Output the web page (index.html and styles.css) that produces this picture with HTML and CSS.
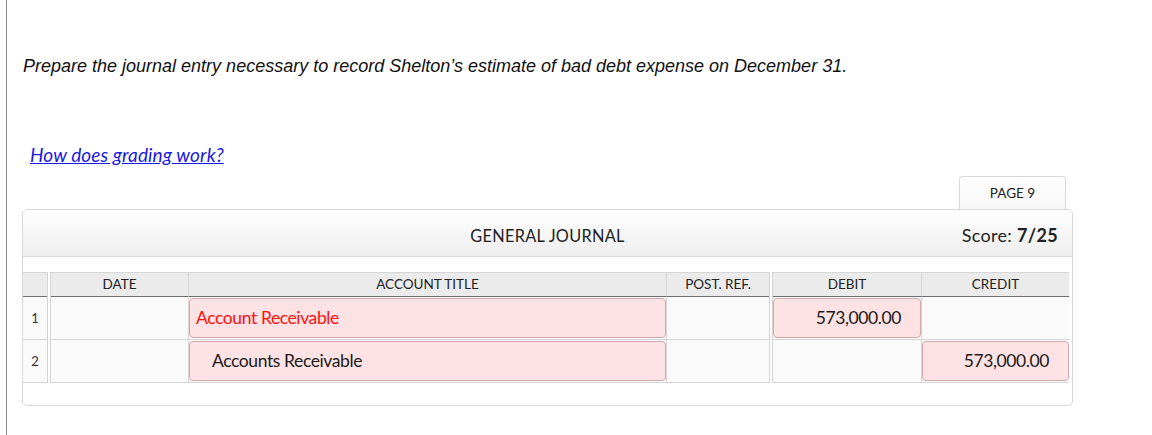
FILE: index.html
```html
<!DOCTYPE html>
<html lang="en">
<head>
<meta charset="utf-8">
<title>General Journal</title>
<link rel="stylesheet" href="styles.css">
</head>
<body>
<div class="page">
  <p class="prompt">Prepare the journal entry necessary to record Shelton’s estimate of bad debt expense on December 31.</p>
  <a class="help" href="#">How does grading work?</a>

  <div class="journal-wrap">
    <div class="tabs"><div class="tab">PAGE 9</div></div>
    <div class="panel">
      <div class="panel-head">
        <div class="title">GENERAL JOURNAL</div>
        <div class="score">Score: <b>7/25</b></div>
      </div>
      <div class="grid">
        <div class="grp grp-a">
          <div class="hcell num"></div>
          <div class="cell num">1</div>
          <div class="cell num">2</div>
        </div>
        <div class="grp grp-b">
          <div class="hcell">DATE</div>
          <div class="hcell">ACCOUNT TITLE</div>
          <div class="hcell">POST. REF.</div>
          <div class="cell"></div>
          <div class="cell"><div class="field wrong">Account Receivable</div></div>
          <div class="cell"></div>
          <div class="cell"></div>
          <div class="cell"><div class="field indent">Accounts Receivable</div></div>
          <div class="cell"></div>
        </div>
        <div class="grp grp-c">
          <div class="hcell">DEBIT</div>
          <div class="hcell">CREDIT</div>
          <div class="cell"><div class="field amount">573,000.00</div></div>
          <div class="cell"></div>
          <div class="cell"></div>
          <div class="cell"><div class="field amount">573,000.00</div></div>
        </div>
      </div>
    </div>
  </div>
</div>
</body>
</html>
```

FILE: styles.css
```css
html, body {
  margin: 0;
  padding: 0;
  background: #fff;
}

.page {
  margin-left: 6px;
  border-left: 1px solid #8a8a8a;
  min-height: 435px;
  padding: 55px 0 0 15px;
  box-sizing: border-box;
}

.prompt {
  margin: 0 0 0 1px;
  font-family: "Liberation Sans", Arial, sans-serif;
  font-style: italic;
  font-size: 18px;
  line-height: 22px;
  color: #111;
}

.help {
  display: block;
  width: max-content;
  margin: 67px 0 0 8px;
  font-family: Lato, "Open Sans", sans-serif;
  font-style: italic;
  font-size: 19px;
  line-height: 22px;
  letter-spacing: 0.1px;
  color: #1a1ae6;
  text-decoration: underline;
}

.journal-wrap {
  width: 1051px;
  margin-top: 10px;
  font-family: Lato, "Open Sans", sans-serif;
  color: #222;
}

.tabs {
  display: flex;
  justify-content: flex-end;
  padding-right: 7px;
}

.tab {
  width: 105px;
  height: 32px;
  border: 1px solid #dadada;
  border-bottom: none;
  border-radius: 4px 4px 0 0;
  background: linear-gradient(#ffffff, #f7f7f7);
  font-size: 13.5px;
  line-height: 33px;
  text-align: center;
  color: #222;
}

.panel {
  border: 1px solid #d9d9d9;
  border-radius: 5px;
  padding-bottom: 22px;
  background: #fff;
}

.panel-head {
  position: relative;
  height: 41px;
  padding-top: 5px;
  border-bottom: 1px solid #dcdcdc;
  border-radius: 5px 5px 0 0;
  background: linear-gradient(#ffffff, #eeeeee);
  display: flex;
  align-items: center;
  justify-content: center;
}

.title {
  font-size: 16.3px;
  letter-spacing: 0.3px;
  color: #222;
}

.score {
  position: absolute;
  right: 14px;
  top: 5px;
  line-height: 41px;
  font-size: 18px;
  letter-spacing: 0.3px;
  color: #222;
}

.score b {
  font-weight: 700;
}

.grid {
  display: flex;
  gap: 2px;
  margin-top: 15px;
}

.grp {
  display: grid;
  grid-template-rows: 25px 43px 43px;
}

.grp-a {
  grid-template-columns: 24px;
  border-right: 1px solid #d4d4d4;
}

.grp-b {
  grid-template-columns: 137px 478px 103px;
  border-left: 1px solid #d4d4d4;
  border-right: 1px solid #d4d4d4;
}

.grp-c {
  grid-template-columns: 148px 148px;
  border-left: 1px solid #d4d4d4;
}

.hcell {
  background: #ebebeb;
  border-top: 1px solid #d6d6d6;
  border-bottom: 1px solid #6e6e6e;
  box-sizing: border-box;
  font-size: 13.5px;
  line-height: 23px;
  text-align: center;
  color: #222;
}

.cell {
  background: #fafafa;
  border-bottom: 1px solid #d6d6d6;
  box-sizing: border-box;
  padding: 1px 0 1px;
}

.grp-b .hcell + .hcell,
.grp-b .cell:nth-of-type(3n+2),
.grp-b .cell:nth-of-type(3n+3),
.grp-c .hcell + .hcell,
.grp-c .cell:nth-of-type(2n+2) {
  border-left: 1px solid #d6d6d6;
}

.cell.num {
  font-size: 13px;
  line-height: 40px;
  text-align: center;
  color: #333;
}

.field {
  height: 40px;
  box-sizing: border-box;
  border: 1px solid #d3aaab;
  border-radius: 4px;
  background: #ffe3e4;
  font-size: 17.5px;
  letter-spacing: -0.4px;
  line-height: 38px;
  padding: 0 6px;
  color: #1a1a1a;
  white-space: nowrap;
}

.field.wrong {
  color: #ff1010;
}

.field.indent {
  padding-left: 22px;
}

.field.amount {
  text-align: right;
  padding-right: 19px;
}
```
